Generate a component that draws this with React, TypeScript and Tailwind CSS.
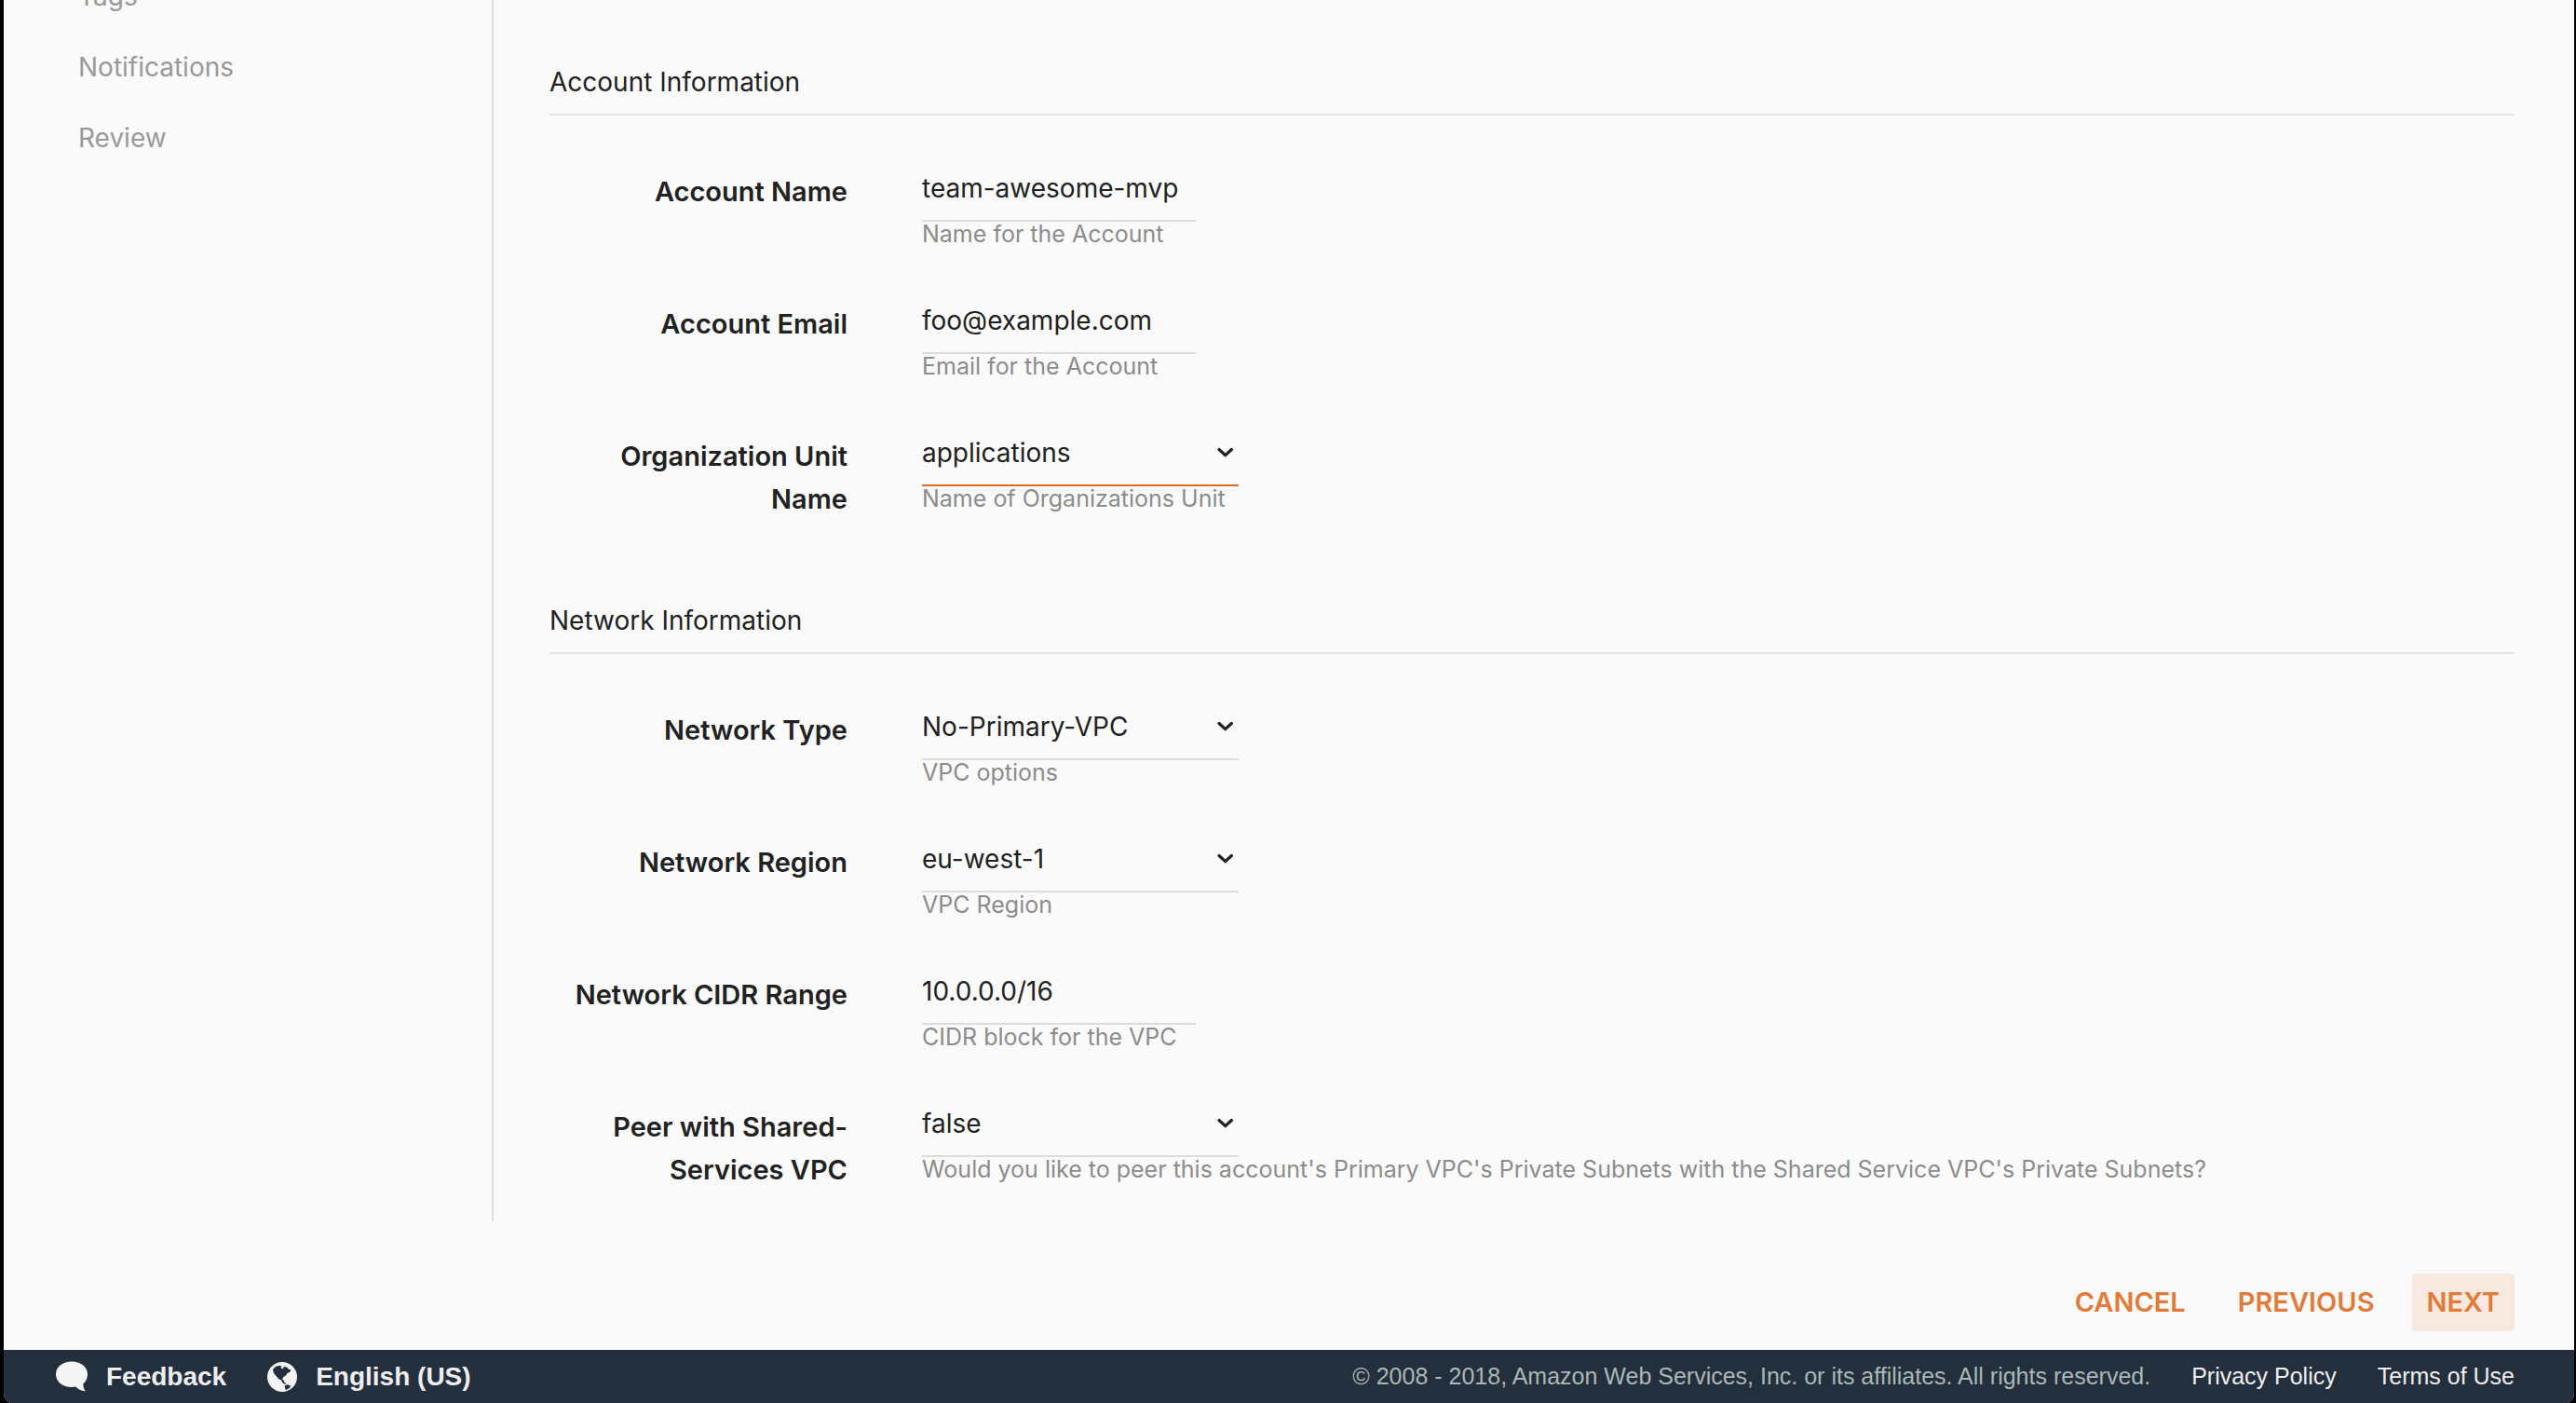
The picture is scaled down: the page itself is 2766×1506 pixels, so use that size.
import React from "react";

const steps = ["Tags", "Notifications", "Review"];

type FieldProps = {
  id: string;
  label: string;
  hint: string;
  value: string;
  options?: string[];
  active?: boolean;
};

function Field({ id, label, hint, value, options, active }: FieldProps) {
  return (
    <div className="grid min-h-[142px] grid-cols-[320px_1fr] items-start gap-x-20 last:min-h-0">
      <label htmlFor={id} className="mt-[13px] text-right text-[29px] leading-[46px] font-semibold">
        {label}
      </label>
      <div>
        {options ? (
          <div className="relative w-[340px]">
            <select
              id={id}
              defaultValue={value}
              aria-describedby={id + "-hint"}
              className={
                active
                  ? "block h-[68px] w-full appearance-none border-b-2 border-[#df6b20] bg-transparent pb-0.5 text-[28px] outline-none"
                  : "block h-[68px] w-full appearance-none border-b-2 border-[#dcdcdc] bg-transparent pb-0.5 text-[28px] outline-none"
              }
            >
              {options.map((o) => (
                <option key={o}>{o}</option>
              ))}
            </select>
            <svg
              viewBox="0 0 18 18"
              className="pointer-events-none absolute top-6 right-1.5 h-[18px] w-[18px]"
              fill="none"
              stroke="#212121"
              strokeWidth="3.2"
              strokeLinecap="round"
              strokeLinejoin="round"
              aria-hidden="true"
            >
              <path d="M3 4.500l6.700 6.200L16.400 4.500" />
            </svg>
          </div>
        ) : (
          <input
            id={id}
            type="text"
            defaultValue={value}
            aria-describedby={id + "-hint"}
            className="block h-[68px] w-[294px] border-b-2 border-[#dcdcdc] bg-transparent pb-0.5 text-[28px] outline-none"
          />
        )}
        <p id={id + "-hint"} className="text-[25px] leading-[26px] whitespace-nowrap text-[#8c8c8c]">
          {hint}
        </p>
      </div>
    </div>
  );
}

function Section({ title, children }: { title: string; children: React.ReactNode }) {
  return (
    <section>
      <h2 className="h-[60px] border-b-2 border-[#e3e3e3] text-[28px] leading-[48px]">{title}</h2>
      <div className="pt-[46px]">{children}</div>
    </section>
  );
}

export default function App() {
  return (
    <div className="bg-black pr-[2px] pl-1 font-['Inter',sans-serif] text-[#212121]">
      <div className="flex min-h-screen flex-col overflow-hidden rounded-b-xl bg-[#fafafa]">
        <main className="flex">
          <nav aria-label="Steps" className="w-[526px] shrink-0 border-r-2 border-[#dfdfdf] pl-20">
            <ul className="-mt-6 text-[28px] leading-10 text-[#999999]">
              {steps.map((s) => (
                <li key={s} className="mb-9">
                  <a href="#">{s}</a>
                </li>
              ))}
            </ul>
          </nav>
          <form className="flex flex-1 flex-col gap-[83px] pt-16 pr-16 pb-8 pl-[60px]">
            <Section title="Account Information">
              <Field id="name" label="Account Name" value="team-awesome-mvp" hint="Name for the Account" />
              <Field id="email" label="Account Email" value="foo@example.com" hint="Email for the Account" />
              <Field
                id="unit"
                label="Organization Unit Name"
                value="applications"
                options={["applications"]}
                hint="Name of Organizations Unit"
                active
              />
            </Section>
            <Section title="Network Information">
              <Field id="type" label="Network Type" value="No-Primary-VPC" options={["No-Primary-VPC"]} hint="VPC options" />
              <Field id="region" label="Network Region" value="eu-west-1" options={["eu-west-1"]} hint="VPC Region" />
              <Field id="cidr" label="Network CIDR Range" value="10.0.0.0/16" hint="CIDR block for the VPC" />
              <Field
                id="peer"
                label="Peer with Shared-Services VPC"
                value="false"
                options={["false", "true"]}
                hint="Would you like to peer this account's Primary VPC's Private Subnets with the Shared Service VPC's Private Subnets?"
              />
            </Section>
          </form>
        </main>
        <div className="mt-auto flex justify-end gap-6 pt-14 pr-16 pb-5 text-[29px] font-semibold text-[#e27a3a]">
          <button type="button" className="h-[62px] rounded px-4">CANCEL</button>
          <button type="button" className="h-[62px] rounded px-4">PREVIOUS</button>
          <button type="button" className="h-[62px] rounded bg-[#f7e9e0] px-4">NEXT</button>
        </div>
        <footer className="flex h-[58px] items-center bg-[#242f3d] pr-16 pl-14 font-['Liberation_Sans',sans-serif] text-[25px] text-[#eeeeee]">
          <button type="button" className="flex items-center gap-5 text-[28px] font-bold">
            <svg viewBox="0 0 34 34" className="h-[34px] w-[34px]" fill="#f4f4f4" aria-hidden="true">
              <path d="M17 .5C7.500 .5 0 6 0 14.200S7.500 28 17 28c1.500 0 3-.1 4.300-.4C23.500 30.200 27 32 32 32.500c-1.700-2-2.700-4.500-2.700-8C32.300 22 34 18.500 34 14.200 34 6 26.500 .5 17 .5z" />
            </svg>
            Feedback
          </button>
          <button type="button" className="ml-11 flex items-center gap-5 text-[28px] font-bold">
            <svg viewBox="0 0 32 32" className="h-8 w-8" aria-hidden="true">
              <circle cx="16" cy="16" r="16" fill="#f4f4f4" />
              <path
                fill="#242f3d"
                d="M6 8.500C7 6 9.500 4.200 12 4l3.500.3-1 2 2 1.200L18 5l3 .5 1.500 2 3 1-1.500 2.500-2.500 1-1.500 2.500-2.500 1.500-1.500 2.500 1.500 1 1 2.500 2 1.500-1 .5-3-1.500-1.500-3-3-1.500-3-3.500L7 12z"
              />
              <path fill="#242f3d" d="M18.500 25.500l3-1.200 3.800 1.200-1.500 2.500-4 2.200z" />
            </svg>
            English (US)
          </button>
          <p className="ml-auto text-[#a9b7b7]">
            © 2008 - 2018, Amazon Web Services, Inc. or its affiliates. All rights reserved.
          </p>
          <a href="#" className="ml-11">Privacy Policy</a>
          <a href="#" className="ml-11">Terms of Use</a>
        </footer>
      </div>
    </div>
  );
}
